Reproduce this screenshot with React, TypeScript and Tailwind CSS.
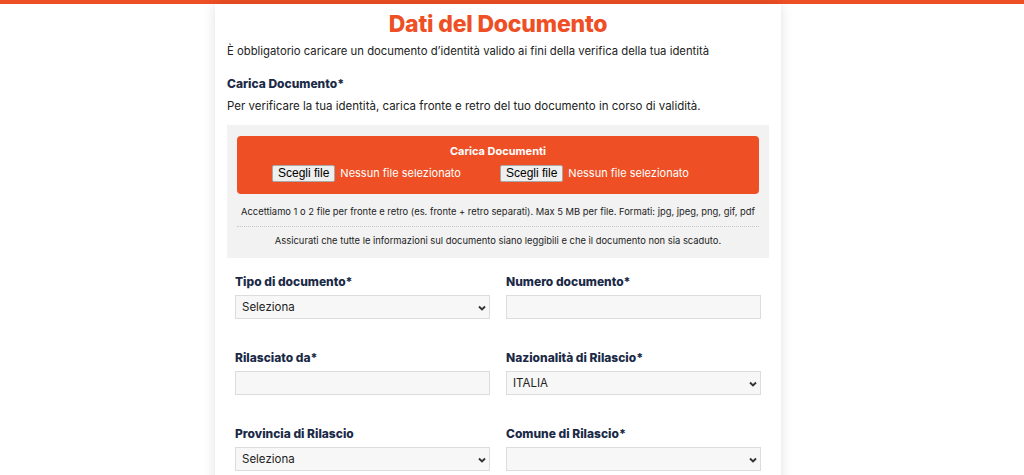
import React from "react";

function Chevron() {
  return (
    <svg width="8" height="6" viewBox="0 0 8 6" className="shrink-0">
      <path d="M1 1.5l3 3 3-3" fill="none" stroke="#333" strokeWidth="1.9" />
    </svg>
  );
}

function Field({ label, kind, value }: { label: string; kind: "select" | "input"; value?: string }) {
  return (
    <div className="flex flex-col">
      <div className="text-[12px] leading-[18px] font-extrabold text-[#1b2a47]">{label}</div>
      <div className="mt-[4px] h-[24px] bg-[#f7f7f7] border border-[#dcdcdc] flex items-center justify-between pl-[6px] pr-[3px] pt-[2px] text-[11.5px] text-[#222]">
        <span>{value ?? ""}</span>
        {kind === "select" ? <Chevron /> : null}
      </div>
    </div>
  );
}

function FilePick() {
  return (
    <div className="w-[228px] flex items-center gap-[5px]">
      <div
        className="h-[17px] px-[5px] bg-[#efefef] border border-[#a8a8a8] rounded-[2px] text-[12px] leading-[15px] text-black flex items-center"
        style={{ fontFamily: '"Liberation Sans", Arial, sans-serif' }}
      >
        Scegli file
      </div>
      <span className="text-[11px] text-white">Nessun file selezionato</span>
    </div>
  );
}

export default function App() {
  return (
    <div
      className="w-full h-[475px] overflow-hidden bg-white"
      style={{ fontFamily: 'Inter, "Noto Sans", sans-serif' }}
    >
      <div className="h-[4px] bg-[#ee4f24]" />
      <div className="w-[996px]">
        <div className="mx-auto w-[566px] bg-white shadow-[0_0_12px_rgba(0,0,0,0.12)] px-[12px] pt-[6px] pb-[20px] min-h-[471px]">
          <h1 className="text-center text-[23px] leading-[28px] font-extrabold text-[#ee4f24] tracking-[-0.2px]">
            Dati del Documento
          </h1>
          <p className="mt-[4px] text-[11.3px] leading-[18px] text-[#222]">
            È obbligatorio caricare un documento d’identità valido ai fini della verifica della tua identità
          </p>
          <div className="mt-[15px] text-[12px] leading-[18px] font-extrabold text-[#1b2a47]">Carica Documento*</div>
          <p className="mt-[4px] text-[11.5px] leading-[18px] text-[#222]">
            Per verificare la tua identità, carica fronte e retro del tuo documento in corso di validità.
          </p>

          <div className="mt-[10px] bg-[#f2f2f2] px-[10px] pt-[11px] pb-[10px]">
            <div className="bg-[#ee4f24] rounded-[4px] pt-[8px] pb-[12px]">
              <div className="text-center text-white font-bold text-[11px] leading-[14px]">Carica Documenti</div>
              <div className="mt-[7px] flex pl-[35px]">
                <FilePick />
                <FilePick />
              </div>
            </div>
            <div className="mt-[11px] text-center text-[9.4px] leading-[14px] text-[#222]">
              Accettiamo 1 o 2 file per fronte e retro (es. fronte + retro separati). Max 5 MB per file. Formati: jpg, jpeg, png, gif, pdf
            </div>
            <div className="mt-[7px] border-t border-dotted border-[#c8c8c8]" />
            <div className="mt-[7px] text-center text-[9.4px] leading-[14px] text-[#222]">
              Assicurati che tutte le informazioni sul documento siano leggibili e che il documento non sia scaduto.
            </div>
          </div>

          <div className="mt-[15px] px-[8px] grid grid-cols-2 gap-x-[16px] gap-y-[30px]">
            <Field label="Tipo di documento*" kind="select" value="Seleziona" />
            <Field label="Numero documento*" kind="input" />
            <Field label="Rilasciato da*" kind="input" />
            <Field label="Nazionalità di Rilascio*" kind="select" value="ITALIA" />
            <Field label="Provincia di Rilascio" kind="select" value="Seleziona" />
            <Field label="Comune di Rilascio*" kind="select" />
          </div>
        </div>
      </div>
    </div>
  );
}
